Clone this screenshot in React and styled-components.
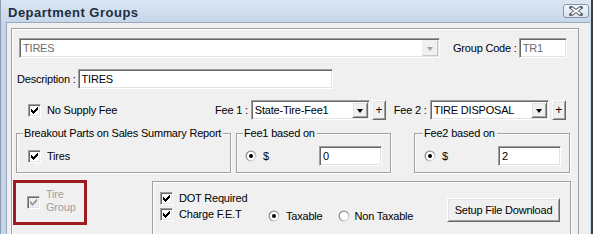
import React from 'react';
import styled, { createGlobalStyle } from 'styled-components';

const GlobalStyle = createGlobalStyle`
  html, body { margin: 0; padding: 0; background: #fff; }
  body {
    font-family: "Liberation Sans", Arial, sans-serif;
    font-size: 11px;
    letter-spacing: -0.2px;
    color: #000;
  }
  * { box-sizing: border-box; }
`;

const Window = styled.div`
  width: 593px;
  height: 234px;
  display: flex;
  flex-direction: column;
  overflow: hidden;
  background: #c6d6ea;
  border-left: 1px solid #8d9cae;
  border-right: 2px solid #3c3f44;
`;

const TitleBar = styled.div`
  height: 22px;
  flex: none;
  display: flex;
  align-items: center;
  justify-content: space-between;
  padding: 2px 2px 0 7px;
  background: linear-gradient(#dbe6f3, #c6d6ea);
`;

const Title = styled.div`
  font-size: 13px;
  font-weight: bold;
  color: #1f2d3d;
  letter-spacing: 0.5px;
`;

const CloseButton = styled.div`
  width: 26px;
  height: 14px;
  margin-top: -3px;
  border: 1px solid #8795a8;
  border-radius: 3px;
  background: linear-gradient(#f4f7fb, #d9e2ee);
  display: flex;
  align-items: center;
  justify-content: center;
`;

const Frame = styled.div`
  flex: 1;
  padding: 0 1px 0 5px;
`;

const Content = styled.div`
  height: 100%;
  background: #f0f0f0;
  border-left: 1px solid #9aa9bb;
  border-top: 1px solid #9aa9bb;
  padding: 5px 0 0 4px;
`;

const Panel = styled.div`
  width: 568px;
  height: 230px;
  border: 1px solid #a0a0a0;
  box-shadow: inset 1px 1px 0 #fff;
  padding: 9px 0 0 0;
`;

const Row = styled.div`
  display: flex;
  align-items: ${p => p.$align || 'center'};
  margin-top: ${p => p.$top || 0}px;
  margin-left: ${p => p.$left || 0}px;
`;

const Label = styled.span`
  white-space: nowrap;
  margin-right: ${p => p.$gap ?? 3}px;
  margin-left: ${p => p.$ml || 0}px;
  color: ${p => (p.$disabled ? '#a0a0a0' : '#000')};
`;

const Sunken = styled.div`
  width: ${p => p.$w}px;
  height: 20px;
  flex: none;
  display: flex;
  align-items: center;
  background: #fff;
  border: 1px solid;
  border-color: #a0a0a0 #fff #fff #a0a0a0;
  box-shadow: inset 1px 1px 0 #696969, inset -1px -1px 0 #e3e3e3;
  padding: 0 2px 0 3px;
  color: ${p => (p.$muted ? '#6d6d6d' : '#000')};
  white-space: nowrap;
`;

const ComboText = styled.span`
  flex: 1;
`;

const Raised = styled.div`
  flex: none;
  display: flex;
  align-items: center;
  justify-content: center;
  background: #f0f0f0;
  border: 1px solid;
  border-color: #fff #696969 #696969 #fff;
  box-shadow: inset 1px 1px 0 #e3e3e3, inset -1px -1px 0 #a0a0a0;
`;

const ArrowButton = styled(Raised)`
  width: 16px;
  height: 16px;
  margin-right: -1px;
  ${p => p.$disabled && 'border-color: #f0f0f0 #c8c8c8 #c8c8c8 #f0f0f0; box-shadow: none;'}
`;

const Arrow = styled.span`
  width: 0;
  height: 0;
  border-left: 3.5px solid transparent;
  border-right: 3.5px solid transparent;
  border-top: 4px solid ${p => (p.$disabled ? '#a0a0a0' : '#000')};
  margin-top: 1px;
`;

const PlusButton = styled(Raised)`
  width: 14px;
  height: 20px;
  margin-left: ${p => p.$ml || 2}px;
  font-size: 12px;
  padding-bottom: 1px;
`;

const PushButton = styled(Raised)`
  width: 113px;
  height: 24px;
  font-size: 11px;
  padding-bottom: 1px;
`;

const CheckItem = styled.div`
  display: flex;
  align-items: center;
  width: ${p => (p.$w ? `${p.$w}px` : 'auto')};
  height: 16px;
  flex: none;
`;

const BoxWrap = styled.span`
  width: 13px;
  height: 13px;
  flex: none;
  display: flex;
  align-items: center;
  justify-content: center;
  background: ${p => (p.$disabled ? '#f0f0f0' : '#fff')};
  border: 1px solid;
  border-color: #a0a0a0 #fff #fff #a0a0a0;
  box-shadow: inset 1px 1px 0 #696969, inset -1px -1px 0 #e3e3e3;
  margin-right: ${p => p.$gap || 6}px;
`;

const GroupBox = styled.fieldset`
  margin: 0;
  margin-left: ${p => p.$ml || 0}px;
  width: ${p => p.$w}px;
  flex: none;
  padding: 0;
  border: 1px solid #a0a0a0;
  box-shadow: inset 1px 1px 0 #fff, 1px 1px 0 #fff;
  min-width: 0;
`;

const Legend = styled.legend`
  padding: 0 2px 0 1px;
  margin-left: ${p => p.$ml ?? 7}px;
  line-height: 13px;
  font-size: 11px;
  white-space: nowrap;
  background: #f0f0f0;
`;

const GroupBody = styled.div`
  height: 32px;
  display: flex;
  align-items: center;
  justify-content: space-between;
  padding: 0 8px 0 ${p => p.$pl || 8}px;
`;

const TireGroupBox = styled.div`
  width: 74px;
  height: 45px;
  flex: none;
  margin-left: 1px;
  border: 3px solid #9d1c21;
  padding: 11px 0 0 11px;
  display: flex;
  align-items: flex-start;
`;

const TwoLine = styled.div`
  line-height: 13px;
  color: #a0a0a0;
  margin-top: -6px;
`;

const OptionsBox = styled.div`
  width: 419px;
  height: 60px;
  flex: none;
  margin: 1px 0 0 65px;
  border: 1px solid #a0a0a0;
  box-shadow: inset 1px 1px 0 #fff, 1px 1px 0 #fff;
  padding: 8px 10px 0 7px;
  display: flex;
  align-items: flex-start;
`;

const Column = styled.div`
  display: flex;
  flex-direction: column;
  width: 108px;
  flex: none;
`;

const RadioRow = styled.div`
  display: flex;
  align-items: center;
  height: 16px;
  margin-top: 18px;
`;

const Spacer = styled.div`
  flex: 1;
`;

const ButtonSlot = styled.div`
  padding-top: 8px;
`;

function Check({ disabled }) {
  const c = disabled ? '#a0a0a0' : '#000';
  return (
    <svg width="7" height="7" viewBox="0 0 7 7" shapeRendering="crispEdges">
      <path d="M0 2 L2 4 L7 -1 L7 2 L2 7 L0 5 Z" fill={c} />
    </svg>
  );
}

function CheckBox({ label, disabled, w, gap }) {
  return (
    <CheckItem $w={w}>
      <BoxWrap $disabled={disabled} $gap={gap}>
        <Check disabled={disabled} />
      </BoxWrap>
      {label && <Label $disabled={disabled}>{label}</Label>}
    </CheckItem>
  );
}

function Radio({ checked, label, gap = 6, ml = 0 }) {
  return (
    <CheckItem>
      <svg width="12" height="12" viewBox="0 0 12 12" style={{ marginLeft: ml, marginRight: gap }}>
        <defs>
          <linearGradient id="rg" x1="0" y1="0" x2="1" y2="1">
            <stop offset="0" stopColor="#7a7a7a" />
            <stop offset="0.5" stopColor="#a0a0a0" />
            <stop offset="1" stopColor="#ffffff" />
          </linearGradient>
        </defs>
        <circle cx="6" cy="6" r="5.5" fill="url(#rg)" />
        <circle cx="6" cy="6" r="4.2" fill="#fff" />
        {checked && <circle cx="6" cy="6" r="2" fill="#000" />}
      </svg>
      <Label>{label}</Label>
    </CheckItem>
  );
}

function Combo({ w, text, disabled }) {
  return (
    <Sunken $w={w} $muted={disabled}>
      <ComboText>{text}</ComboText>
      <ArrowButton $disabled={disabled}>
        <Arrow $disabled={disabled} />
      </ArrowButton>
    </Sunken>
  );
}

export default function App() {
  return (
    <>
      <GlobalStyle />
      <Window>
        <TitleBar>
          <Title>Department Groups</Title>
          <CloseButton>
            <svg width="14" height="10" viewBox="0 0 14 10">
              <path d="M2 1.5 L12 8.5 M12 1.5 L2 8.5" stroke="#59636f" strokeWidth="3.6" strokeLinecap="square" />
              <path d="M2.5 2 L11.5 8 M11.5 2 L2.5 8" stroke="#fff" strokeWidth="1.6" />
            </svg>
          </CloseButton>
        </TitleBar>
        <Frame>
          <Content>
            <Panel>
              <Row $left={7}>
                <Combo w={421} text="TIRES" disabled />
                <Label $ml={13} $gap={2}>Group Code :</Label>
                <Sunken $w={48} $muted>TR1</Sunken>
              </Row>

              <Row $left={5} $top={11}>
                <Label $gap={2}>Description :</Label>
                <Sunken $w={255}>TIRES</Sunken>
              </Row>

              <Row $left={16} $top={11}>
                <CheckBox label="No Supply Fee" w={187} />
                <Label>Fee 1 :</Label>
                <Combo w={119} text="State-Tire-Fee1" />
                <PlusButton>+</PlusButton>
                <Label $ml={8}>Fee 2 :</Label>
                <Combo w={119} text="TIRE DISPOSAL" />
                <PlusButton $ml={3}>+</PlusButton>
              </Row>

              <Row $left={4} $top={7} $align="flex-start">
                <GroupBox $w={215}>
                  <Legend $ml={6}>Breakout Parts on Sales Summary Report</Legend>
                  <GroupBody $pl={11}>
                    <CheckBox label="Tires" />
                  </GroupBody>
                </GroupBox>
                <GroupBox $w={155} $ml={5}>
                  <Legend $ml={6}>Fee1 based on</Legend>
                  <GroupBody>
                    <Radio checked label="$" />
                    <Sunken $w={63}>0</Sunken>
                  </GroupBody>
                </GroupBox>
                <GroupBox $w={156} $ml={23}>
                  <Legend $ml={8}>Fee2 based on</Legend>
                  <GroupBody $pl={9}>
                    <Radio checked label="$" />
                    <Sunken $w={63}>2</Sunken>
                  </GroupBody>
                </GroupBox>
              </Row>

              <Row $top={7} $align="flex-start">
                <TireGroupBox>
                  <CheckBox disabled gap={6} />
                  <TwoLine>Tire<br />Group</TwoLine>
                </TireGroupBox>
                <OptionsBox>
                  <Column>
                    <CheckBox label="DOT Required" />
                    <CheckBox label="Charge F.E.T" />
                  </Column>
                  <RadioRow>
                    <Radio checked label="Taxable" />
                    <Radio label="Non Taxable" ml={12} gap={5} />
                  </RadioRow>
                  <Spacer />
                  <ButtonSlot>
                    <PushButton>Setup File Download</PushButton>
                  </ButtonSlot>
                </OptionsBox>
              </Row>
            </Panel>
          </Content>
        </Frame>
      </Window>
    </>
  );
}
